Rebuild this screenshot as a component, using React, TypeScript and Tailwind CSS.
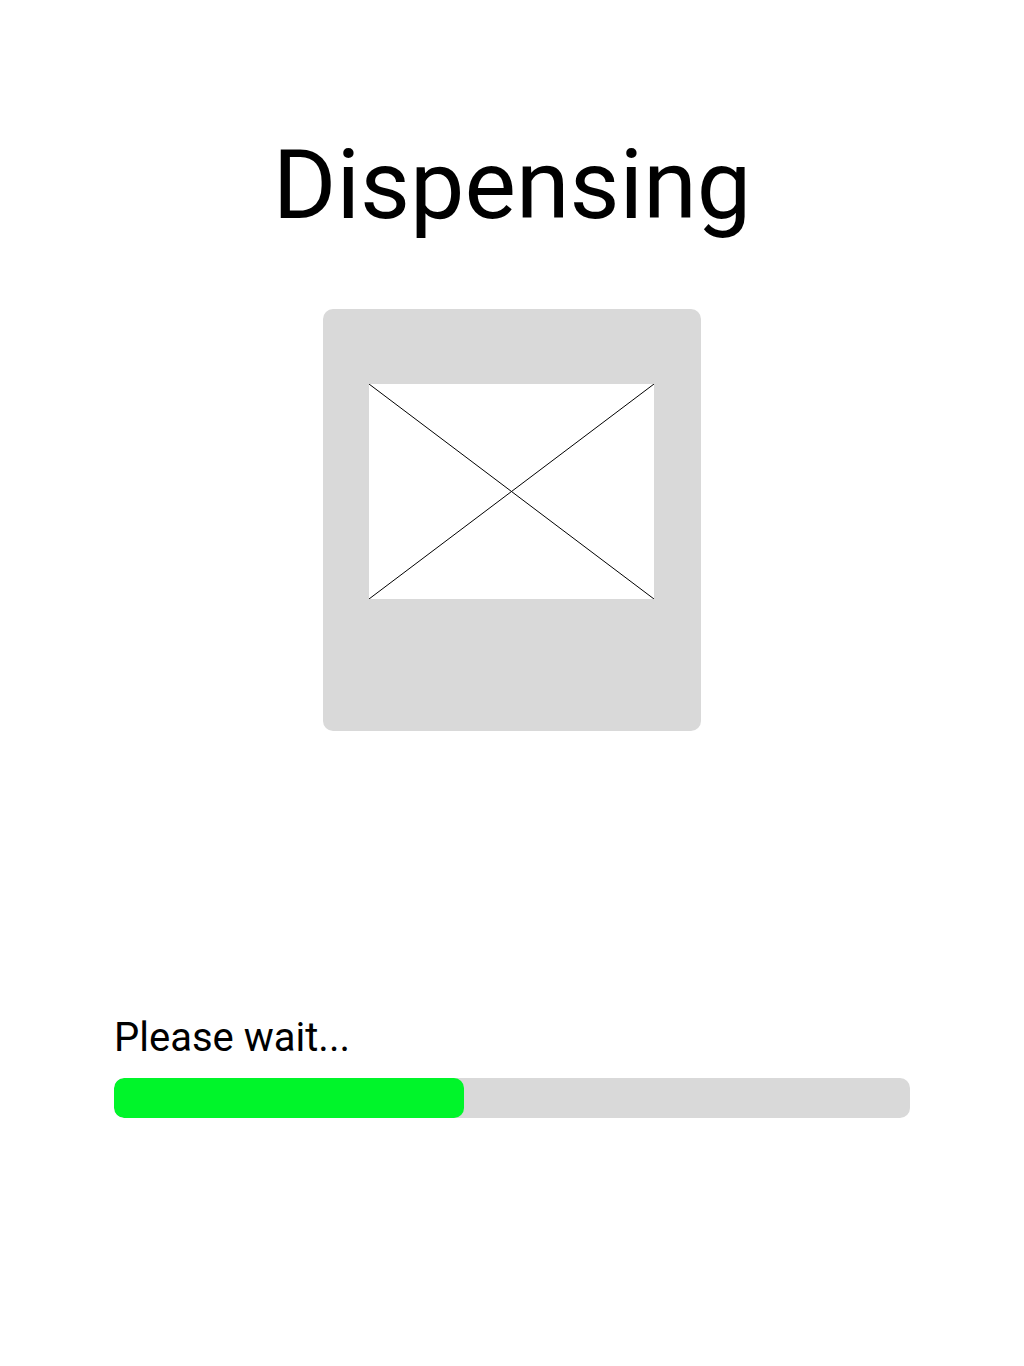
const progress = 350 / 796;

const ImagePlaceholder = () => (
  <svg width="285" height="215" viewBox="0 0 285 215" className="block bg-white">
    <line x1="0" y1="0" x2="285" y2="215" stroke="#000" strokeWidth="1" />
    <line x1="285" y1="0" x2="0" y2="215" stroke="#000" strokeWidth="1" />
  </svg>
);

export default function App() {
  return (
    <div className="min-h-[1366px] w-full bg-white flex flex-col items-center font-['Roboto',sans-serif] text-black">
      <h1 className="mt-[128px] text-[97px] leading-[114px] font-normal">Dispensing</h1>

      {/* product card */}
      <div className="mt-[67px] w-[378px] h-[422px] bg-[#d9d9d9] rounded-[10px] pt-[75px] pl-[46px]">
        <ImagePlaceholder />
      </div>

      <div className="mt-[283px] w-[796px]">
        <p className="text-[40px] leading-[47px]">Please wait...</p>
        <div className="mt-[17px] h-[40px] w-full bg-[#d9d9d9] rounded-[10px] overflow-hidden">
          <div className="h-full bg-[#00f52a] rounded-[10px]" style={{ width: `${progress * 100}%` }} />
        </div>
      </div>
    </div>
  );
}
